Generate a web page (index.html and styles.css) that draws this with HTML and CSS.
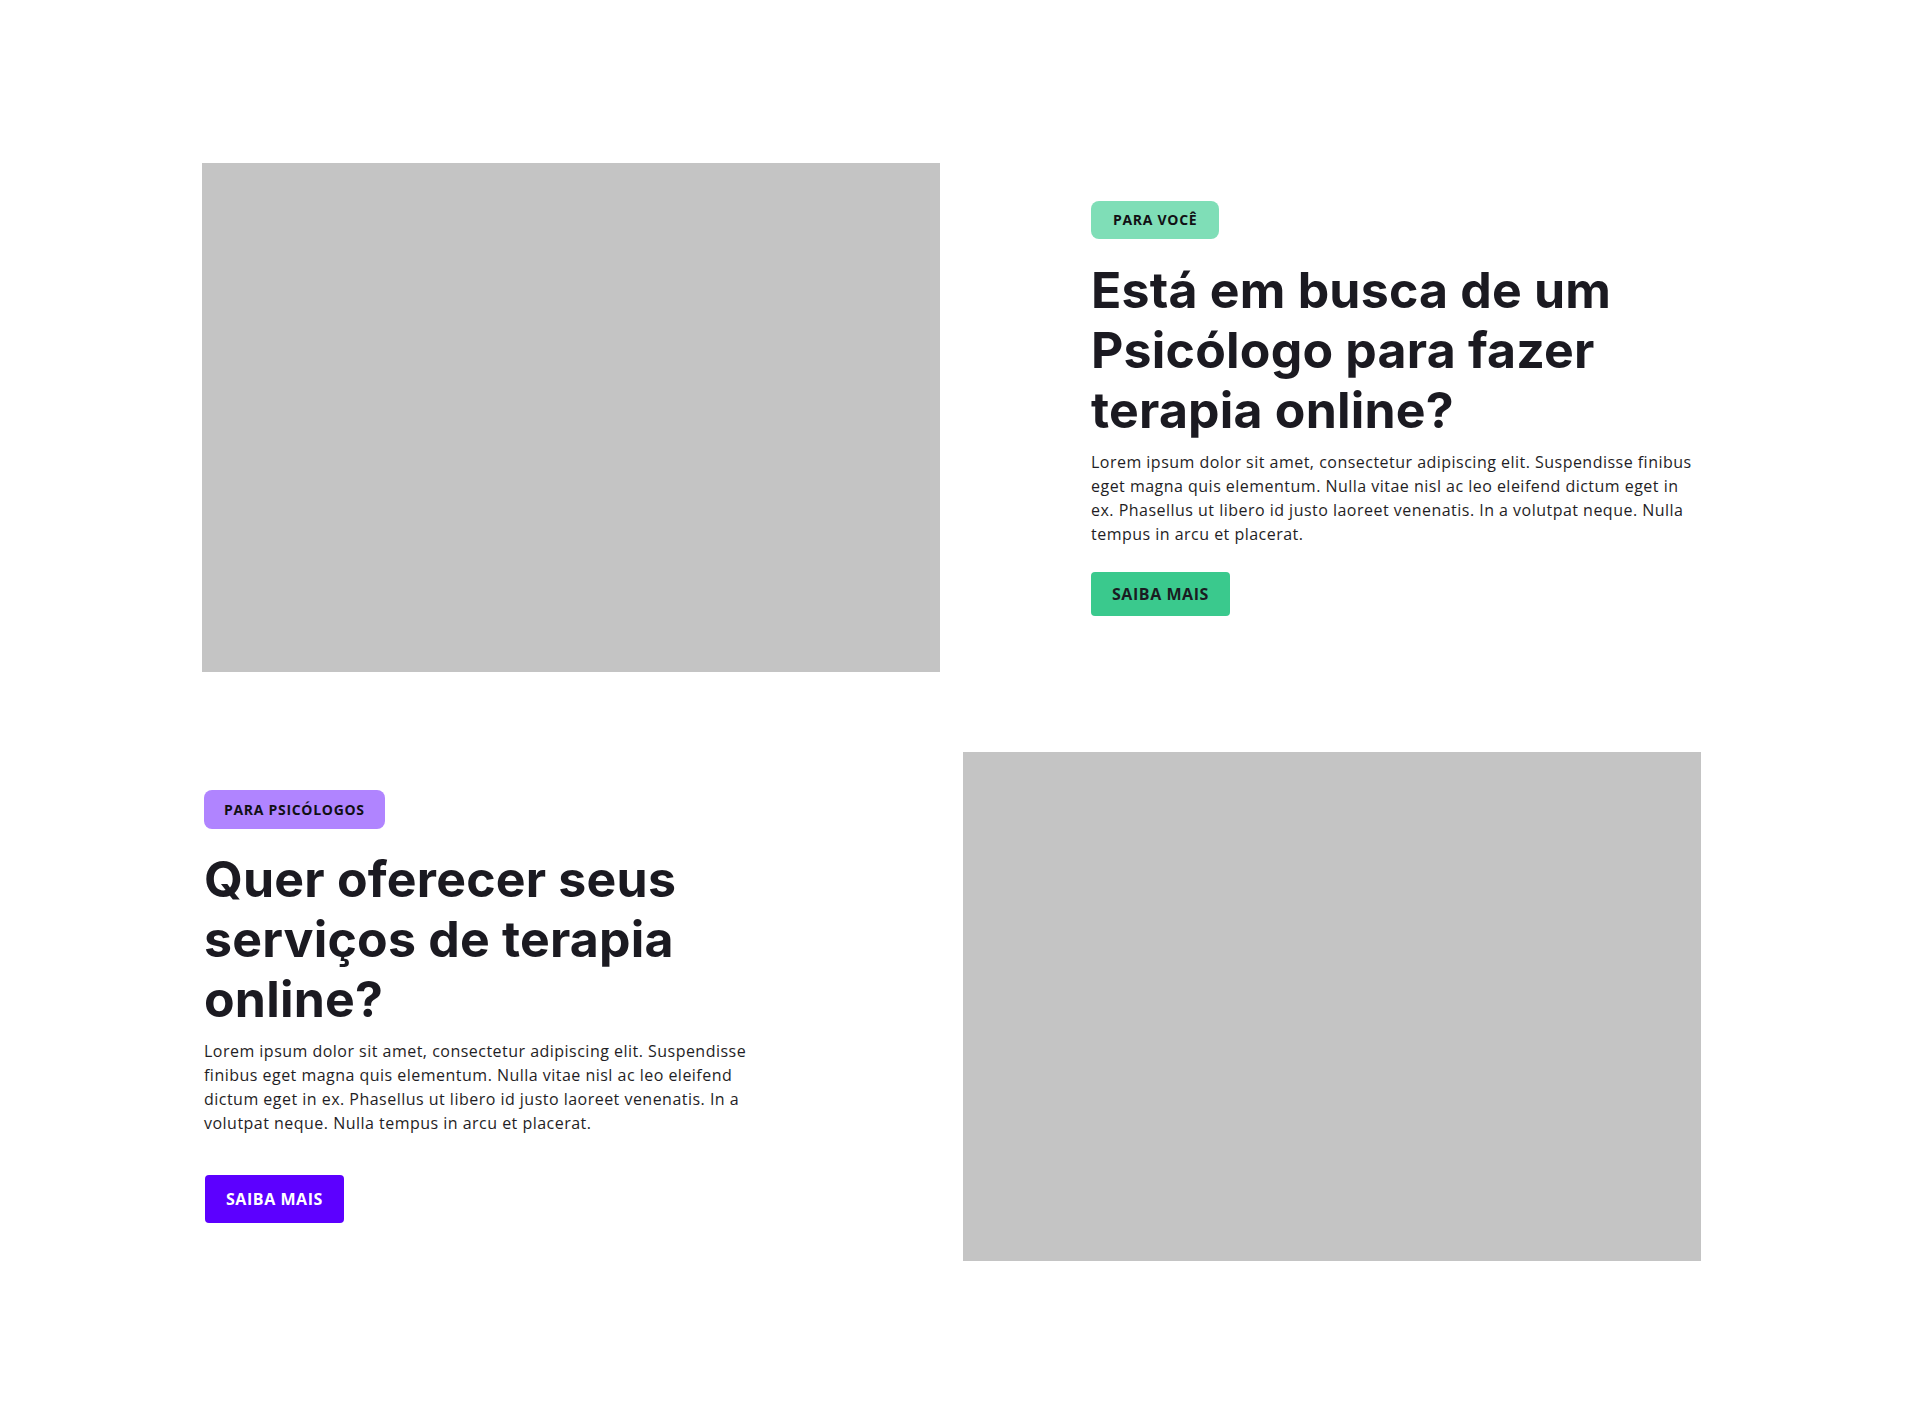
FILE: index.html
```html
<!DOCTYPE html>
<html lang="pt-BR">
<head>
<meta charset="utf-8">
<title>Terapia online</title>
<link rel="stylesheet" href="styles.css">
</head>
<body>
<main class="page">
  <section class="row row-first">
    <div class="image-placeholder"></div>
    <div class="text-col text-col-right">
      <span class="badge badge-green">PARA VOCÊ</span>
      <h2 class="title">Está em busca de um Psicólogo para fazer terapia online?</h2>
      <p class="desc">Lorem ipsum dolor sit amet, consectetur adipiscing elit. Suspendisse finibus eget magna quis elementum. Nulla vitae nisl ac leo eleifend dictum eget in ex. Phasellus ut libero id justo laoreet venenatis. In a volutpat neque. Nulla tempus in arcu et placerat.</p>
      <a class="btn btn-green" href="#">SAIBA MAIS</a>
    </div>
  </section>
  <section class="row row-second">
    <div class="text-col text-col-left">
      <span class="badge badge-purple">PARA PSICÓLOGOS</span>
      <h2 class="title">Quer oferecer seus serviços de terapia online?</h2>
      <p class="desc">Lorem ipsum dolor sit amet, consectetur adipiscing elit. Suspendisse finibus eget magna quis elementum. Nulla vitae nisl ac leo eleifend dictum eget in ex. Phasellus ut libero id justo laoreet venenatis. In a volutpat neque. Nulla tempus in arcu et placerat.</p>
      <a class="btn btn-purple" href="#">SAIBA MAIS</a>
    </div>
    <div class="image-placeholder"></div>
  </section>
</main>
</body>
</html>
```

FILE: styles.css
```css
* { box-sizing: border-box; }
html, body { margin: 0; padding: 0; background: #ffffff; }
body { font-family: "Open Sans", "Noto Sans", sans-serif; color: #1c1b22; }

.page {
  padding: 163px 0 0 202px;
  width: 1920px;
  min-height: 1425px;
  display: flex;
  flex-direction: column;
  gap: 80px;
}

.row { display: flex; align-items: flex-start; }

.image-placeholder {
  width: 738px;
  height: 509px;
  background: #c4c4c4;
  flex: none;
}

.text-col { display: flex; flex-direction: column; align-items: flex-start; padding-top: 38px; }
.text-col-right { width: 607px; margin-left: 151px; }
.text-col-left { width: 561px; margin-left: 2px; margin-right: 198px; }

.badge {
  display: inline-block;
  font-family: "Open Sans", sans-serif;
  font-weight: 700;
  font-size: 14px;
  line-height: 38px;
  height: 38px;
  letter-spacing: 0.05em;
  color: #111014;
  border-radius: 8px;
}
.badge-green { background: #7fdeb7; padding: 0 22px; }
.badge-purple { background: #b084ff; padding: 0 20px; height: 39px; line-height: 39px; }

.title {
  font-family: "Inter", "Noto Sans", sans-serif;
  font-weight: 700;
  font-size: 50px;
  line-height: 60px;
  letter-spacing: 0.2px;
  color: #1b1a21;
  margin: 21px 0 0 0;
}
.text-col-left .title { margin-top: 20px; }

.desc {
  font-family: "Open Sans", sans-serif;
  font-size: 16px;
  line-height: 24px;
  letter-spacing: 0.03em;
  color: #1f1e25;
  margin: 10px 0 0 0;
}

.btn {
  display: inline-block;
  font-family: "Open Sans", sans-serif;
  font-weight: 700;
  font-size: 16px;
  letter-spacing: 0.035em;
  text-decoration: none;
  border-radius: 4px;
  padding: 0 21px;
}
.btn-green { background: #3ac98d; color: #1a1c22; height: 44px; line-height: 44px; margin-top: 26px; }
.btn-purple { background: #5c00ff; color: #ffffff; height: 48px; line-height: 48px; margin-top: 40px; margin-left: 1px; }
```
